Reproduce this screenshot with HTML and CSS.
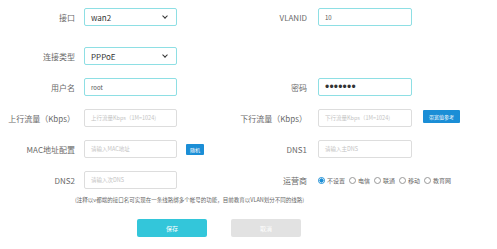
FILE: index.html
```html
<!DOCTYPE html>
<html lang="zh-CN">

<head>
  <meta charset="UTF-8" />
  <meta name="viewport" content="width=device-width, initial-scale=1.0" />
  <title>WAN设置</title>
  <link rel="stylesheet" href="styles.css">
</head>

<body>

  <main class="wan-form">

    <div class="form-row row-first">
      <label>接口</label>
      <div class="field select active"><span>wan2</span><i class="chev"></i></div>
      <div></div>
      <label>VLANID</label>
      <div class="field active small">10</div>
      <div></div>
    </div>

    <div class="form-row">
      <label>连接类型</label>
      <div class="field select active"><span>PPPoE</span><i class="chev"></i></div>
      <div></div>
      <div></div>
      <div></div>
      <div></div>
    </div>

    <div class="form-row">
      <label>用户名</label>
      <div class="field active small">root</div>
      <div></div>
      <label>密码</label>
      <div class="field active dots">•••••••</div>
      <div></div>
    </div>

    <div class="form-row">
      <label>上行流量（Kbps）</label>
      <div class="field hint">上行流量Kbps（1M=1024)</div>
      <div></div>
      <label>下行流量（Kbps）</label>
      <div class="field hint">下行流量Kbps（1M=1024)</div>
      <div class="extra"><button type="button" class="mini-btn wide">带宽值参考</button></div>
    </div>

    <div class="form-row">
      <label>MAC地址配置</label>
      <div class="field hint">请输入MAC地址</div>
      <div class="extra"><button type="button" class="mini-btn">随机</button></div>
      <label>DNS1</label>
      <div class="field hint">请输入主DNS</div>
      <div></div>
    </div>

    <div class="form-row">
      <label>DNS2</label>
      <div class="field hint">请输入次DNS</div>
      <div></div>
      <label>运营商</label>
      <div class="radios">
        <span class="radio on"></span>不设置
        <span class="radio"></span>电信
        <span class="radio"></span>联通
        <span class="radio"></span>移动
        <span class="radio"></span>教育网
      </div>
    </div>

    <p class="note">(注释以v都端的接口名可实现在一条线路绑多个帐号的功能，目前教育以VLAN划分不同的线路)</p>

    <div class="form-submit">
      <button type="button" class="btn save">保存</button>
      <button type="button" class="btn cancel">取消</button>
    </div>

  </main>

</body>

</html>
```

FILE: styles.css
```css
* {
    box-sizing: border-box;
}
html, body {
    margin: 0;
    padding: 0;
    background: #fff;
}
body {
    font-family: "Noto Sans CJK SC", "Liberation Sans", sans-serif;
    color: #555;
}
.wan-form {
    padding-top: 8px;
    width: 497px;
}
.form-row {
    display: grid;
    grid-template-columns: 84px 93px 55px 86px 94px 1fr;
    align-items: center;
    height: 18px;
    margin-bottom: 13px;
}
.form-row.row-first {
    margin-bottom: 21px;
}
.form-row label {
    padding-right: 9px;
    text-align: right;
    font-size: 8px;
    white-space: nowrap;
    color: #6a6a6a;
}
.form-row label:nth-of-type(2) {
    padding-right: 11px;
}
.field {
    height: 18px;
    padding: 0 6px;
    display: flex;
    align-items: center;
    border: 1px solid #ddd;
    border-radius: 2px;
    font-size: 8px;
    color: #333;
    white-space: nowrap;
    overflow: hidden;
}
.field.active {
    border-color: #8edfe4;
}
.field.small {
    font-size: 6px;
    color: #555;
}
.field.dots {
    font-family: "Liberation Sans", sans-serif;
    font-size: 12px;
    letter-spacing: 0.2px;
    color: #333;
}
.field.hint {
    font-size: 5.5px;
    color: #c4c4c4;
}
.field.select {
    justify-content: space-between;
}
.chev {
    width: 4px;
    height: 4px;
    margin-right: 3px;
    margin-top: -2px;
    border-right: 1.3px solid #333;
    border-bottom: 1.3px solid #333;
    transform: rotate(45deg);
}
.extra {
    display: flex;
    align-items: center;
    padding-left: 9px;
}
.form-row > .extra:last-child {
    padding-left: 11px;
}
.mini-btn {
    margin: 0;
    padding: 0 4px;
    height: 11px;
    border: 0;
    border-radius: 1px;
    background: #1b8ed6;
    color: #fff;
    font-size: 5px;
    font-family: inherit;
    line-height: 11px;
}
.mini-btn.wide {
    width: 37px;
    height: 13px;
    margin-top: -4px;
}
.radios {
    grid-column: 5 / 7;
    display: flex;
    align-items: center;
    font-size: 6px;
    color: #666;
    white-space: nowrap;
}
.radio {
    width: 7px;
    height: 7px;
    margin: 0 2px 0 4px;
    border: 1px solid #999;
    border-radius: 50%;
}
.radio:first-child {
    margin-left: 0;
}
.radio.on {
    border-color: #1b8ed6;
    background: radial-gradient(circle, #1b8ed6 55%, #fff 60%);
}
.note {
    margin: -6px 0 0 75px;
    font-size: 5.5px;
    color: #666;
    white-space: nowrap;
}
.form-submit {
    margin-top: 15px;
    display: flex;
    gap: 24px;
    padding-left: 137px;
}
.btn {
    width: 70px;
    height: 18px;
    border: 0;
    border-radius: 2px;
    color: #fff;
    font-size: 6px;
    font-family: inherit;
}
.btn.save {
    background: #33c6da;
}
.btn.cancel {
    background: #e2e2e2;
}
```
